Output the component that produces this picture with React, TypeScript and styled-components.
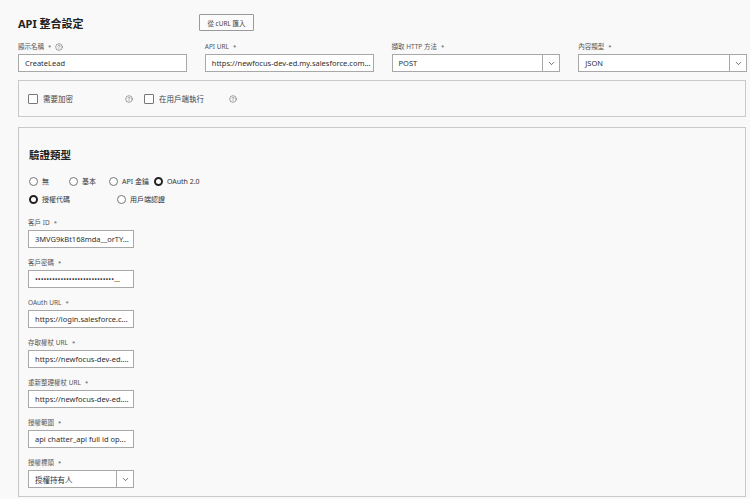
import styled, { createGlobalStyle } from 'styled-components';
import { ChevronDown, CircleHelp } from 'lucide-react';

const GlobalStyle = createGlobalStyle`
  html, body {
    margin: 0;
    padding: 0;
    background: #f9f9f9;
  }
  body {
    font-family: "Noto Sans", "Noto Sans CJK TC", sans-serif;
    color: #333;
  }
`;

const Page = styled.div`
  width: 750px;
  padding: 14px 3px 0 18px;
  box-sizing: border-box;
`;

const Header = styled.div`
  display: flex;
  align-items: center;
  height: 17px;
  margin-bottom: 11px;
`;

const Title = styled.h1`
  width: 181px;
  margin: 0;
  font-size: 11px;
  font-weight: 700;
  color: #222;
`;

const GhostButton = styled.button`
  height: 17px;
  width: 55px;
  padding: 0;
  border: 1px solid #9a9a9a;
  border-radius: 1px;
  background: #fbfbfb;
  font-family: inherit;
  font-size: 6.5px;
  color: #444;
`;

const TopGrid = styled.div`
  display: grid;
  grid-template-columns: repeat(4, minmax(0, 1fr));
  column-gap: 18px;
  margin-bottom: 8px;
`;

const Field = styled.div<{ $width?: number }>`
  width: ${({ $width }) => ($width ? `${$width}px` : 'auto')};
  min-width: 0;
  margin-bottom: ${({ $width }) => ($width ? '10px' : '0')};
`;

const Label = styled.div`
  display: flex;
  align-items: center;
  gap: 4px;
  height: 10px;
  line-height: 10px;
  margin-bottom: 2px;
  font-size: 6.5px;
  color: #555;
  white-space: nowrap;
`;

const Star = styled.span`
  font-size: 6px;
  color: #555;
`;

const Input = styled.div`
  height: 18px;
  box-sizing: border-box;
  border: 1px solid #a8a8a8;
  background: #fff;
  padding: 0 6px;
  display: flex;
  align-items: center;
  font-size: 7.5px;
  color: #2e2e2e;
  white-space: nowrap;
  overflow: hidden;
`;

const Select = styled.div`
  height: 18px;
  box-sizing: border-box;
  border: 1px solid #a8a8a8;
  background: #fff;
  display: flex;
  align-items: stretch;
  font-size: 7.5px;
  color: #2e2e2e;
`;

const SelectValue = styled.div`
  flex: 1;
  display: flex;
  align-items: center;
  padding: 0 6px;
`;

const SelectArrow = styled.div`
  width: 16px;
  border-left: 1px solid #a8a8a8;
  display: flex;
  align-items: center;
  justify-content: center;
  color: #444;
`;

const Panel = styled.div`
  border: 1px solid #c9c9c9;
  background: #f9f9f9;
  box-sizing: border-box;
  width: 728px;
`;

const OptionsPanel = styled(Panel)`
  height: 37px;
  padding-left: 9px;
  display: flex;
  align-items: center;
  margin-bottom: 10px;
`;

const CheckItem = styled.label<{ $width: number }>`
  width: ${({ $width }) => $width}px;
  display: flex;
  align-items: center;
  gap: 5px;
  font-size: 7.5px;
  color: #444;
`;

const Box = styled.span`
  width: 8px;
  height: 8px;
  border: 1px solid #777;
  background: #fff;
  border-radius: 1px;
`;

const Help = styled.span`
  display: flex;
  align-items: center;
  color: #555;
  margin-right: 11px;
`;

const AuthPanel = styled(Panel)`
  height: 370px;
  padding: 20px 9px 0 9px;
`;

const SectionTitle = styled.h2`
  margin: 0 0 14px 1px;
  font-size: 10.5px;
  line-height: 14px;
  font-weight: 700;
  color: #222;
`;

const RadioGroup = styled.div`
  display: flex;
  flex-direction: column;
  gap: 8px;
  margin-bottom: 14px;
`;

const RadioRow = styled.div`
  display: flex;
  align-items: center;
  height: 10px;
`;

const RadioItem = styled.label<{ $min: number }>`
  min-width: ${({ $min }) => $min}px;
  margin-right: 4px;
  margin-left: 1px;
  display: flex;
  align-items: center;
  gap: 4px;
  font-size: 7px;
  color: #333;
  white-space: nowrap;
`;

const RadioDot = styled.span<{ $on?: boolean }>`
  width: 9px;
  height: 9px;
  box-sizing: border-box;
  border-radius: 50%;
  background: #fff;
  border: ${({ $on }) => ($on ? '2.5px solid #222' : '1px solid #777')};
`;

const Fields = styled.div`
  display: flex;
  flex-direction: column;
`;

const top = [
  { label: '顯示名稱', help: true, value: 'CreateLead' },
  { label: 'API URL', value: 'https://newfocus-dev-ed.my.salesforce.com...' },
  { label: '擷取 HTTP 方法', value: 'POST', select: true },
  { label: '內容類型', value: 'JSON', select: true },
];

const auth = [
  { label: '客戶 ID', value: '3MVG9kBt168mda__orTY...' },
  { label: '客戶密碼', value: '••••••••••••••••••••••••••••...' },
  { label: 'OAuth URL', value: 'https://login.salesforce.c...' },
  { label: '存取權杖 URL', value: 'https://newfocus-dev-ed....' },
  { label: '重新整理權杖 URL', value: 'https://newfocus-dev-ed....' },
  { label: '授權範圍', value: 'api chatter_api full id op...' },
  { label: '授權標頭', value: '授權持有人', select: true },
];

function SelectBox({ value }: { value: string }) {
  return (
    <Select>
      <SelectValue>{value}</SelectValue>
      <SelectArrow>
        <ChevronDown size={9} strokeWidth={2} />
      </SelectArrow>
    </Select>
  );
}

export default function App() {
  return (
    <>
      <GlobalStyle />
      <Page>
        <Header>
          <Title>API 整合設定</Title>
          <GhostButton>從 cURL 匯入</GhostButton>
        </Header>

        <TopGrid>
          {top.map((f) => (
            <Field key={f.label}>
              <Label>
                {f.label} <Star>*</Star>
                {f.help && <CircleHelp size={8} strokeWidth={1.6} />}
              </Label>
              {f.select ? <SelectBox value={f.value} /> : <Input>{f.value}</Input>}
            </Field>
          ))}
        </TopGrid>

        <OptionsPanel>
          <CheckItem $width={97}>
            <Box /> 需要加密
          </CheckItem>
          <Help>
            <CircleHelp size={8} strokeWidth={1.6} />
          </Help>
          <CheckItem $width={85}>
            <Box /> 在用戶端執行
          </CheckItem>
          <Help>
            <CircleHelp size={8} strokeWidth={1.6} />
          </Help>
        </OptionsPanel>

        <AuthPanel>
          <SectionTitle>驗證類型</SectionTitle>
          <RadioGroup>
            <RadioRow>
              <RadioItem $min={35}>
                <RadioDot /> 無
              </RadioItem>
              <RadioItem $min={35}>
                <RadioDot /> 基本
              </RadioItem>
              <RadioItem $min={35}>
                <RadioDot /> API 金鑰
              </RadioItem>
              <RadioItem $min={35}>
                <RadioDot $on /> OAuth 2.0
              </RadioItem>
            </RadioRow>
            <RadioRow>
              <RadioItem $min={83}>
                <RadioDot $on /> 授權代碼
              </RadioItem>
              <RadioItem $min={83}>
                <RadioDot /> 用戶端認證
              </RadioItem>
            </RadioRow>
          </RadioGroup>

          <Fields>
            {auth.map((f) => (
              <Field key={f.label} $width={106}>
                <Label>
                  {f.label} <Star>*</Star>
                </Label>
                {f.select ? <SelectBox value={f.value} /> : <Input>{f.value}</Input>}
              </Field>
            ))}
          </Fields>
        </AuthPanel>
      </Page>
    </>
  );
}
